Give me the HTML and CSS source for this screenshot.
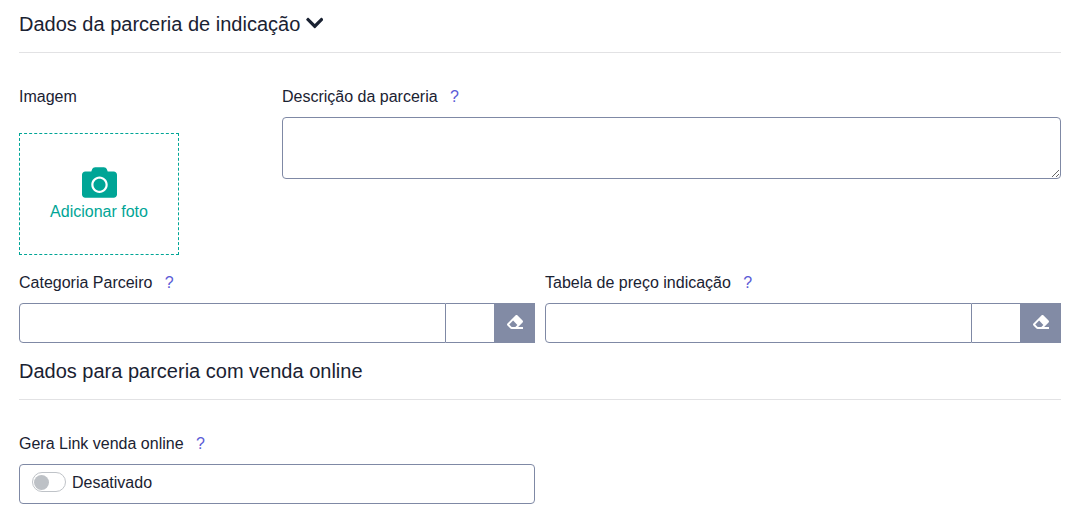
FILE: index.html
```html
<!DOCTYPE html>
<html lang="pt-BR">
<head>
<meta charset="utf-8">
<title>Parceria de indicação</title>
<link rel="stylesheet" href="styles.css">
</head>
<body>
<main class="form">
  <h2 class="section-title">Dados da parceria de indicação
    <svg class="chevron" viewBox="0 0 448 512"><path d="M207.029 381.476L12.686 187.132c-9.373-9.373-9.373-24.569 0-33.941l22.667-22.667c9.357-9.357 24.522-9.375 33.901-.04L224 284.505l154.745-154.021c9.379-9.335 24.544-9.317 33.901.04l22.667 22.667c9.373 9.373 9.373 24.569 0 33.941L240.971 381.476c-9.373 9.372-24.569 9.372-33.942 0z"/></svg>
  </h2>
  <div class="row row-top">
    <div class="field">
      <span class="label">Imagem</span>
      <button class="photo" type="button">
        <svg class="camera" viewBox="0 0 512 512"><path d="M512 144v288c0 26.5-21.5 48-48 48H48c-26.5 0-48-21.5-48-48V144c0-26.5 21.5-48 48-48h88l12.3-32.9c7-18.7 24.9-31.1 44.9-31.1h125.5c20 0 37.9 12.4 44.9 31.1L376 96h88c26.5 0 48 21.5 48 48zM376 288c0-66.2-53.8-120-120-120s-120 53.8-120 120 53.8 120 120 120 120-53.8 120-120zm-32 0c0 48.5-39.5 88-88 88s-88-39.5-88-88 39.5-88 88-88 88 39.5 88 88z"/></svg>
        <span>Adicionar foto</span>
      </button>
    </div>
    <div class="field">
      <label class="label" for="descricao">Descrição da parceria <span class="help">?</span></label>
      <textarea class="textarea" id="descricao"></textarea>
    </div>
  </div>
  <div class="row">
    <div class="field">
      <label class="label" for="categoria">Categoria Parceiro <span class="help">?</span></label>
      <div class="group">
        <input class="input" id="categoria" type="text">
        <span class="addon"></span>
        <button class="clear" type="button" aria-label="Limpar"><svg class="eraser" viewBox="0 0 512 512"><path d="M497.941 273.941c18.745-18.745 18.745-49.137 0-67.882l-160-160c-18.745-18.745-49.136-18.746-67.883 0l-256 256c-18.745 18.745-18.745 49.137 0 67.882l96 96A48.004 48.004 0 0 0 144 480h356c6.627 0 12-5.373 12-12v-40c0-6.627-5.373-12-12-12H355.883l142.058-142.059zm-302.627-62.627l137.373 137.373L265.373 416H150.628l-80-80 124.686-124.686z"/></svg></button>
      </div>
    </div>
    <div class="field">
      <label class="label" for="tabela">Tabela de preço indicação <span class="help">?</span></label>
      <div class="group">
        <input class="input" id="tabela" type="text">
        <span class="addon"></span>
        <button class="clear" type="button" aria-label="Limpar"><svg class="eraser" viewBox="0 0 512 512"><path d="M497.941 273.941c18.745-18.745 18.745-49.137 0-67.882l-160-160c-18.745-18.745-49.136-18.746-67.883 0l-256 256c-18.745 18.745-18.745 49.137 0 67.882l96 96A48.004 48.004 0 0 0 144 480h356c6.627 0 12-5.373 12-12v-40c0-6.627-5.373-12-12-12H355.883l142.058-142.059zm-302.627-62.627l137.373 137.373L265.373 416H150.628l-80-80 124.686-124.686z"/></svg></button>
      </div>
    </div>
  </div>
  <h2 class="section-title">Dados para parceria com venda online</h2>
  <div class="row">
    <div class="field">
      <span class="label">Gera Link venda online <span class="help">?</span></span>
      <div class="switch-box">
        <span class="switch"><span class="knob"></span></span>
        <span>Desativado</span>
      </div>
    </div>
  </div>
</main>
</body>
</html>
```

FILE: styles.css
```css
* { box-sizing: border-box; }
body {
  margin: 0;
  background: #fff;
  color: #1a2232;
  font: 16px/24px "Liberation Sans", Arial, sans-serif;
}
.form { padding: 12px 20px 0 19px; }
.section-title {
  margin: 0 0 32px;
  padding-bottom: 16px;
  border-bottom: 1px solid #e2e2e4;
  font-size: 20px;
  font-weight: 400;
  line-height: 24px;
}
.chevron {
  width: 17.5px;
  height: 20px;
  vertical-align: -2px;
  fill: currentColor;
}
.row {
  display: grid;
  grid-template-columns: 1fr 1fr;
  gap: 10px;
  margin-bottom: 16px;
}
.row-top { grid-template-columns: 253px 1fr; }
.field {
  display: flex;
  flex-direction: column;
  align-items: stretch;
}
.label { margin-bottom: 8px; }
.help { margin-left: 8px; color: #5b5bd6; }
.photo {
  display: flex;
  flex-direction: column;
  align-items: center;
  justify-content: center;
  width: 160px;
  height: 122px;
  margin-top: 16px;
  padding: 1px 0 0;
  border: 1px dashed #00a596;
  background: none;
  color: #00a596;
  font: inherit;
}
.camera { width: 35px; height: 35px; fill: currentColor; }
.textarea {
  display: block;
  height: 62px;
  padding: 6px 12px;
  border: 1px solid #7f89a5;
  border-radius: 4px;
  background: #fff;
  font: inherit;
  resize: vertical;
}
.group { display: flex; height: 40px; }
.input {
  flex: 1;
  min-width: 0;
  padding: 6px 12px;
  border: 1px solid #7f89a5;
  border-radius: 4px 0 0 4px;
  font: inherit;
}
.addon {
  width: 48px;
  border: solid #7f89a5;
  border-width: 1px 0;
}
.clear {
  display: flex;
  align-items: center;
  justify-content: center;
  width: 41px;
  padding: 0 0 2px;
  border: 0;
  background: #828ba5;
}
.eraser { width: 16px; height: 16px; fill: #fff; }
.switch-box {
  display: flex;
  align-items: center;
  gap: 6px;
  height: 40px;
  padding: 0 12px 3px;
  border: 1px solid #7f89a5;
  border-radius: 4px;
}
.switch {
  display: flex;
  align-items: center;
  width: 34px;
  height: 20px;
  margin-bottom: 1px;
  padding: 1px 1px 0;
  border: 1px solid #bfc3c8;
  border-radius: 10px;
}
.knob {
  width: 15px;
  height: 15px;
  border-radius: 50%;
  background: #bdc1c6;
}
```
